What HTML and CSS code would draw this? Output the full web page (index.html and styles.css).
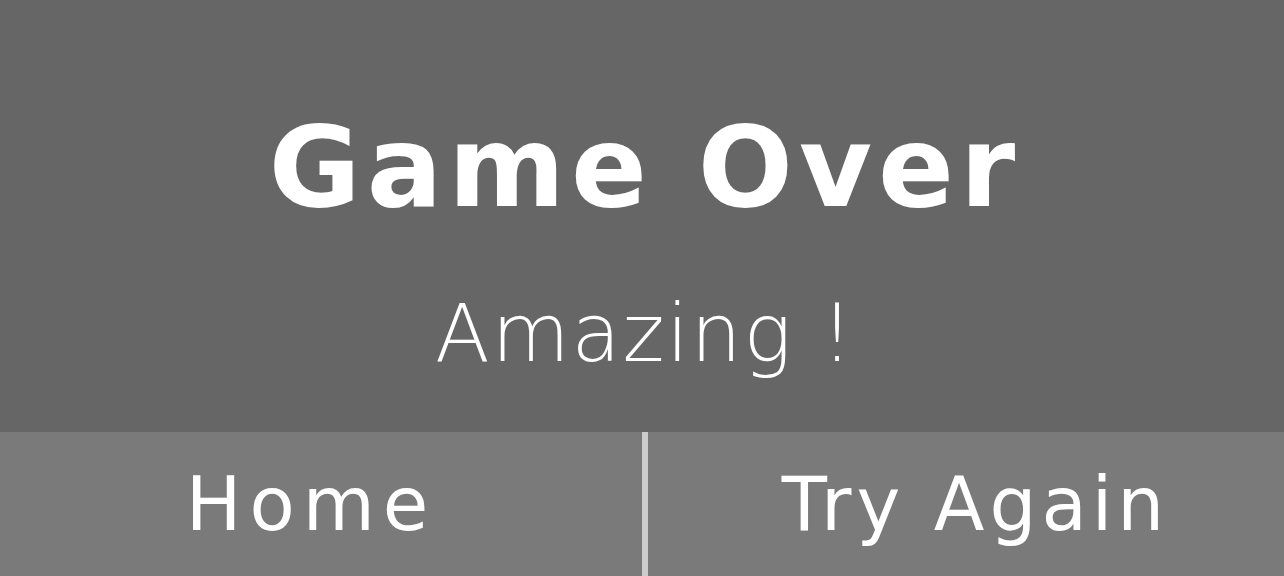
FILE: index.html
```html
<!DOCTYPE html>
<html>
<head>
<meta charset="utf-8">
<link rel="stylesheet" href="styles.css">
</head>
<body>
<div class="screen">
  <div class="panel">
    <h1 class="title">Game Over</h1>
    <p class="subtitle">Amazing !</p>
  </div>
  <div class="actions">
    <button class="btn btn-home">Home</button>
    <div class="divider"></div>
    <button class="btn btn-retry">Try Again</button>
  </div>
</div>
</body>
</html>
```
FILE: styles.css
```css
html, body {
  margin: 0;
  padding: 0;
  background: #666666;
}
.screen {
  width: 1284px;
  height: 576px;
  display: flex;
  flex-direction: column;
  font-family: "DejaVu Sans", sans-serif;
  color: #ffffff;
}
.panel {
  height: 432px;
  background: #666666;
  display: flex;
  flex-direction: column;
  align-items: center;
}
.title {
  margin: 0;
  padding-top: 102px;
  font-size: 112px;
  font-weight: 700;
  letter-spacing: 6px;
  text-indent: 6px;
  line-height: 130px;
}
.subtitle {
  margin: 0;
  padding-top: 42px;
  padding-left: 6px;
  font-size: 80px;
  font-weight: 200;
  letter-spacing: 2px;
  line-height: 120px;
}
.actions {
  flex: 1;
  display: flex;
  background: #7a7a7a;
}
.btn {
  border: 0;
  background: #7a7a7a;
  color: #ffffff;
  font-family: "DejaVu Sans", sans-serif;
  font-size: 74px;
  font-weight: 400;
  padding: 0;
}
.btn-home {
  width: 642px;
  letter-spacing: 8px;
  padding-right: 20px;
}
.btn-retry {
  flex: 1;
  letter-spacing: 5px;
  padding-left: 19px;
}
.divider {
  width: 6px;
  background: #cccccc;
}
```
